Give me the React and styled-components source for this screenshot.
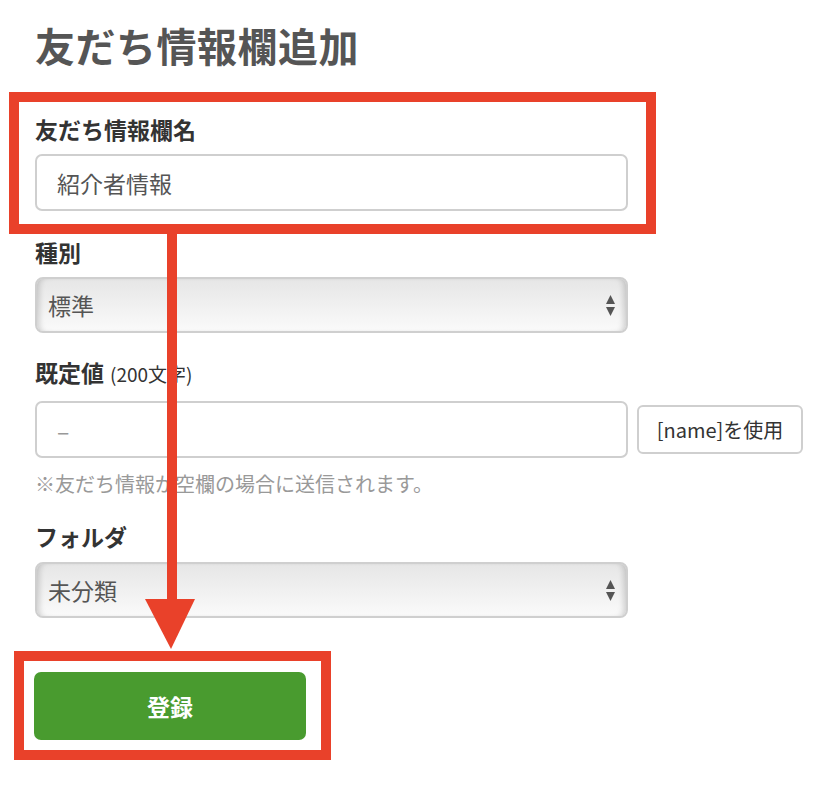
import React from "react";
import styled, { createGlobalStyle } from "styled-components";

const GlobalStyle = createGlobalStyle`
  body {
    margin: 0;
    background: #fff;
    font-family: "Noto Sans CJK JP", "Noto Sans", sans-serif;
    color: #333;
  }
`;

const RED = "#e9412a";

const Page = styled.div`
  position: relative;
  width: 840px;
  height: 798px;
  padding: 22px 0 0 35px;
  box-sizing: border-box;
`;

const Title = styled.h1`
  margin: 0 0 24px;
  font-size: 40px;
  line-height: 46px;
  font-weight: 700;
  color: #555;
  letter-spacing: 0.5px;
`;

const Highlight = styled.div`
  box-sizing: border-box;
  border: 10px solid ${RED};
  margin-left: ${(p) => p.$offset}px;
  width: ${(p) => p.$width}px;
  padding: ${(p) => p.$pad};
`;

const Form = styled.div`
  width: 593px;
`;

const Label = styled.div`
  font-size: 23px;
  line-height: 30px;
  font-weight: 700;
  color: #333;
  margin-top: ${(p) => p.$top || 0}px;
  margin-bottom: ${(p) => p.$bottom || 10}px;

  small {
    font-size: 19px;
    font-weight: 400;
    margin-left: 6px;
  }
`;

const TextInput = styled.input`
  box-sizing: border-box;
  width: ${(p) => p.$width || "100%"};
  height: 57px;
  border: 2px solid #cfcfcf;
  border-radius: 7px;
  padding: 0 20px;
  font-family: inherit;
  font-size: 23px;
  color: #555;
  background: #fff;
  outline: none;

  &::placeholder {
    color: #999;
  }
`;

const SelectBox = styled.div`
  position: relative;
  box-sizing: border-box;
  height: 56px;
  border: 2px solid #cfcfcf;
  border-radius: 8px;
  background: linear-gradient(#e6e6e6, #fafafa);
  box-shadow: inset 6px 0 6px -4px rgba(0, 0, 0, 0.18),
    inset -6px 0 6px -4px rgba(0, 0, 0, 0.18);
  display: flex;
  align-items: center;
  padding-left: 11px;
  font-size: 23px;
  color: #555;
`;

const SelectArrows = styled.svg`
  position: absolute;
  right: 10px;
  top: 16px;
`;

const Row = styled.div`
  display: flex;
  align-items: center;
  gap: 9px;
  width: 770px;
`;

const SideButton = styled.button`
  flex: none;
  width: 166px;
  height: 49px;
  border: 2px solid #cfcfcf;
  border-radius: 6px;
  background: #fff;
  font-family: inherit;
  font-size: 20px;
  color: #333;
  padding: 0;
`;

const Help = styled.div`
  margin-top: 13px;
  font-size: 20px;
  line-height: 26px;
  color: #999;
`;

const SubmitButton = styled.button`
  display: block;
  width: 272px;
  height: 68px;
  border: none;
  border-radius: 7px;
  background: #499b2f;
  color: #fff;
  font-family: inherit;
  font-size: 23px;
  font-weight: 700;
`;

const ArrowOverlay = styled.svg`
  position: absolute;
  left: 140px;
  top: 230px;
`;

function Select({ value }) {
  return (
    <SelectBox>
      {value}
      <SelectArrows width="11" height="22" viewBox="0 0 11 22">
        <path d="M5.5 0 L10 9 L1 9 Z" fill="#555" />
        <path d="M1 12 L10 12 L5.5 21 Z" fill="#555" />
      </SelectArrows>
    </SelectBox>
  );
}

export default function App() {
  return (
    <Page>
      <GlobalStyle />
      <Title>友だち情報欄追加</Title>

      <Highlight $offset={-26} $width={647} $pad="12px 18px 13px 16px">
        <Form>
          <Label>友だち情報欄名</Label>
          <TextInput defaultValue="紹介者情報" />
        </Form>
      </Highlight>

      <Form>
        <Label $top={3}>種別</Label>
        <Select value="標準" />

        <Label $top={24} $bottom={12}>
          既定値<small>(200文字)</small>
        </Label>
      </Form>
      <Row>
        <TextInput $width="593px" placeholder="–" />
        <SideButton>[name]を使用</SideButton>
      </Row>
      <Form>
        <Help>※友だち情報が空欄の場合に送信されます。</Help>

        <Label $top={24} $bottom={11}>フォルダ</Label>
        <Select value="未分類" />
      </Form>

      <Highlight
        $offset={-21}
        $width={317}
        $pad="11px 15px 10px 10px"
        style={{ marginTop: 33 }}
      >
        <SubmitButton>登録</SubmitButton>
      </Highlight>

      <ArrowOverlay width="60" height="422" viewBox="0 0 60 422">
        <rect x="27" y="0" width="10" height="372" fill={RED} />
        <path d="M5 369 L55 369 L31 419 Z" fill={RED} />
      </ArrowOverlay>
    </Page>
  );
}
